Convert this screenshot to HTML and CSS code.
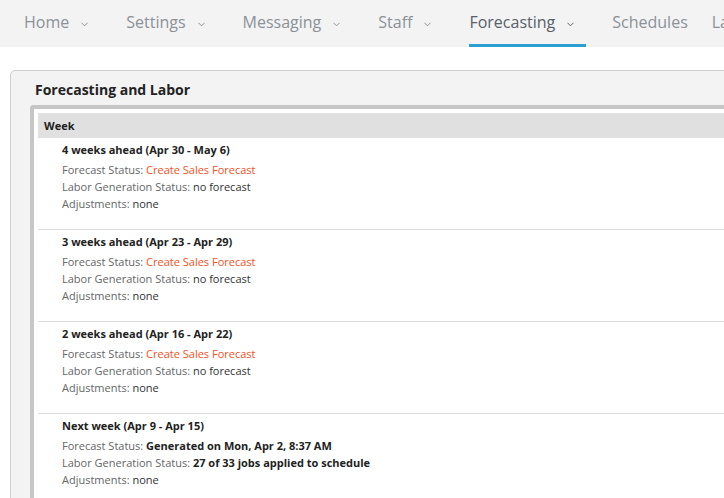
FILE: index.html
```html
<!DOCTYPE html>
<html>
<head>
<meta charset="utf-8">
<link rel="stylesheet" href="styles.css">
</head>
<body>
<nav class="nav">
  <div class="nav-item">Home<svg class="chev" viewBox="0 0 8 5"><polyline points="0.5,0.5 4,4 7.5,0.5"/></svg></div>
  <div class="nav-item">Settings<svg class="chev" viewBox="0 0 8 5"><polyline points="0.5,0.5 4,4 7.5,0.5"/></svg></div>
  <div class="nav-item">Messaging<svg class="chev" viewBox="0 0 8 5"><polyline points="0.5,0.5 4,4 7.5,0.5"/></svg></div>
  <div class="nav-item">Staff<svg class="chev" viewBox="0 0 8 5"><polyline points="0.5,0.5 4,4 7.5,0.5"/></svg></div>
  <div class="nav-item active">Forecasting<svg class="chev" viewBox="0 0 8 5"><polyline points="0.5,0.5 4,4 7.5,0.5"/></svg></div>
  <div class="nav-item plain">Schedules</div>
  <div class="nav-item plain">Labor</div>
</nav>
<section class="panel">
  <h2 class="panel-title">Forecasting and Labor</h2>
  <div class="box">
    <div class="head">Week</div>
    <div class="row">
      <div class="week">4 weeks ahead (Apr 30 - May 6)</div>
      <div class="line"><span class="lbl">Forecast Status:</span> <a class="link">Create Sales Forecast</a></div>
      <div class="line"><span class="lbl">Labor Generation Status:</span> <span class="val">no forecast</span></div>
      <div class="line"><span class="lbl">Adjustments:</span> <span class="val">none</span></div>
    </div>
    <div class="row">
      <div class="week">3 weeks ahead (Apr 23 - Apr 29)</div>
      <div class="line"><span class="lbl">Forecast Status:</span> <a class="link">Create Sales Forecast</a></div>
      <div class="line"><span class="lbl">Labor Generation Status:</span> <span class="val">no forecast</span></div>
      <div class="line"><span class="lbl">Adjustments:</span> <span class="val">none</span></div>
    </div>
    <div class="row">
      <div class="week">2 weeks ahead (Apr 16 - Apr 22)</div>
      <div class="line"><span class="lbl">Forecast Status:</span> <a class="link">Create Sales Forecast</a></div>
      <div class="line"><span class="lbl">Labor Generation Status:</span> <span class="val">no forecast</span></div>
      <div class="line"><span class="lbl">Adjustments:</span> <span class="val">none</span></div>
    </div>
    <div class="row">
      <div class="week">Next week (Apr 9 - Apr 15)</div>
      <div class="line"><span class="lbl">Forecast Status:</span> <b class="strong">Generated on Mon, Apr 2, 8:37 AM</b></div>
      <div class="line"><span class="lbl">Labor Generation Status:</span> <b class="strong">27 of 33 jobs applied to schedule</b></div>
      <div class="line"><span class="lbl">Adjustments:</span> <span class="val">none</span></div>
    </div>
  </div>
</section>
</body>
</html>
```
FILE: styles.css
```css
html { overflow: hidden; }
body {
  margin: 0;
  width: 900px;
  font-family: "Open Sans", "Liberation Sans", sans-serif;
  background: #fff;
  color: #333;
}
.nav {
  display: flex;
  gap: 26px;
  height: 47px;
  padding-left: 24px;
  background: #f3f3f3;
  box-sizing: border-box;
}
.nav-item {
  display: flex;
  align-items: center;
  height: 44px;
  font-size: 16px;
  color: #8c9198;
  border-bottom: 3px solid transparent;
  padding-right: 12px;
  white-space: nowrap;
}
.nav-item.plain { padding-right: 0; margin-right: -2px; }
.nav-item.active {
  color: #596068;
  border-bottom-color: #2b9fd0;
}
.chev {
  width: 7px;
  height: 5px;
  margin-left: 12px;
  margin-top: 4px;
  fill: none;
  stroke: currentColor;
  stroke-width: 1.1;
}
.panel {
  margin: 23px 0 0 10px;
  background: #f3f3f3;
  border: 1px solid #cfcfcf;
  border-radius: 5px 0 0 0;
  padding: 0 0 0 19px;
}
.panel-title {
  margin: 0;
  padding: 9px 0 0 5px;
  height: 25px;
  font-size: 14px;
  font-weight: 700;
  color: #222;
  line-height: 20px;
}
.box {
  background: #fff;
  border-left: 4px solid #c6c6c6;
  border-top: 4px solid #c6c6c6;
  border-radius: 4px 0 0 0;
  padding: 4px 0 0 4px;
}
.head {
  height: 25px;
  background: #e0e0e0;
  font-size: 11px;
  font-weight: 700;
  line-height: 25px;
  padding-left: 6px;
  color: #222;
}
.row {
  padding: 3px 24px 17px;
  border-bottom: 1px solid #dcdcdc;
  font-size: 11px;
  line-height: 17px;
}
.week {
  font-weight: 700;
  color: #222;
  margin-bottom: 3px;
}
.lbl { color: #666; }
.val { color: #333; }
.link { color: #f4511e; }
.strong { color: #222; }
```
